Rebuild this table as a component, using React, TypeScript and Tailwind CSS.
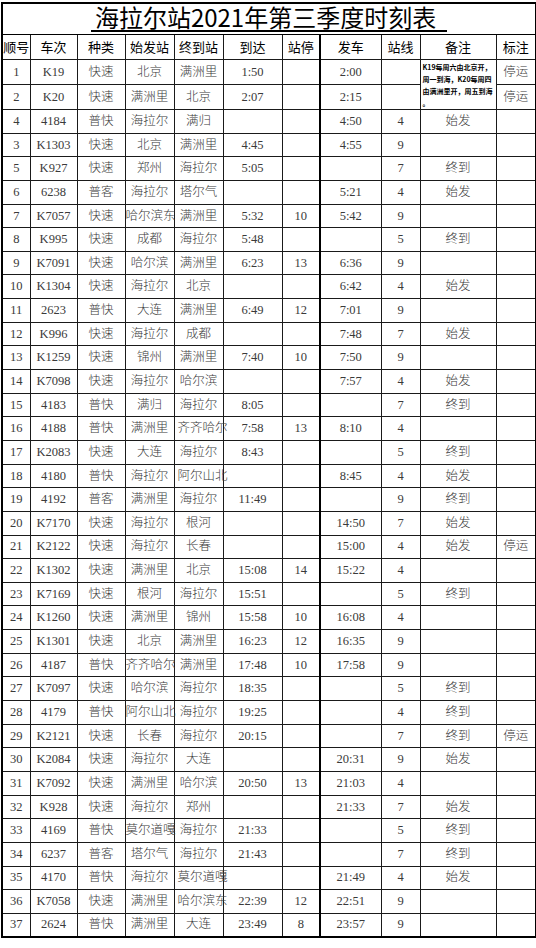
import React from "react";

type Row = [string, string, string, string, string, string, string, string, string, string, string];

const rows: Row[] = [
  ["1", "K19", "快速", "北京", "满洲里", "1:50", "", "2:00", "", "", "停运"],
  ["2", "K20", "快速", "满洲里", "北京", "2:07", "", "2:15", "", "", "停运"],
  ["4", "4184", "普快", "海拉尔", "满归", "", "", "4:50", "4", "始发", ""],
  ["3", "K1303", "快速", "北京", "满洲里", "4:45", "", "4:55", "9", "", ""],
  ["5", "K927", "快速", "郑州", "海拉尔", "5:05", "", "", "7", "终到", ""],
  ["6", "6238", "普客", "海拉尔", "塔尔气", "", "", "5:21", "4", "始发", ""],
  ["7", "K7057", "快速", "哈尔滨东", "满洲里", "5:32", "10", "5:42", "9", "", ""],
  ["8", "K995", "快速", "成都", "海拉尔", "5:48", "", "", "5", "终到", ""],
  ["9", "K7091", "快速", "哈尔滨", "满洲里", "6:23", "13", "6:36", "9", "", ""],
  ["10", "K1304", "快速", "海拉尔", "北京", "", "", "6:42", "4", "始发", ""],
  ["11", "2623", "普快", "大连", "满洲里", "6:49", "12", "7:01", "9", "", ""],
  ["12", "K996", "快速", "海拉尔", "成都", "", "", "7:48", "7", "始发", ""],
  ["13", "K1259", "快速", "锦州", "满洲里", "7:40", "10", "7:50", "9", "", ""],
  ["14", "K7098", "快速", "海拉尔", "哈尔滨", "", "", "7:57", "4", "始发", ""],
  ["15", "4183", "普快", "满归", "海拉尔", "8:05", "", "", "7", "终到", ""],
  ["16", "4188", "普快", "满洲里", "齐齐哈尔", "7:58", "13", "8:10", "4", "", ""],
  ["17", "K2083", "快速", "大连", "海拉尔", "8:43", "", "", "5", "终到", ""],
  ["18", "4180", "普快", "海拉尔", "阿尔山北", "", "", "8:45", "4", "始发", ""],
  ["19", "4192", "普客", "满洲里", "海拉尔", "11:49", "", "", "9", "终到", ""],
  ["20", "K7170", "快速", "海拉尔", "根河", "", "", "14:50", "7", "始发", ""],
  ["21", "K2122", "快速", "海拉尔", "长春", "", "", "15:00", "4", "始发", "停运"],
  ["22", "K1302", "快速", "满洲里", "北京", "15:08", "14", "15:22", "4", "", ""],
  ["23", "K7169", "快速", "根河", "海拉尔", "15:51", "", "", "5", "终到", ""],
  ["24", "K1260", "快速", "满洲里", "锦州", "15:58", "10", "16:08", "4", "", ""],
  ["25", "K1301", "快速", "北京", "满洲里", "16:23", "12", "16:35", "9", "", ""],
  ["26", "4187", "普快", "齐齐哈尔", "满洲里", "17:48", "10", "17:58", "9", "", ""],
  ["27", "K7097", "快速", "哈尔滨", "海拉尔", "18:35", "", "", "5", "终到", ""],
  ["28", "4179", "普快", "阿尔山北", "海拉尔", "19:25", "", "", "4", "终到", ""],
  ["29", "K2121", "快速", "长春", "海拉尔", "20:15", "", "", "7", "终到", "停运"],
  ["30", "K2084", "快速", "海拉尔", "大连", "", "", "20:31", "9", "始发", ""],
  ["31", "K7092", "快速", "满洲里", "哈尔滨", "20:50", "13", "21:03", "4", "", ""],
  ["32", "K928", "快速", "海拉尔", "郑州", "", "", "21:33", "7", "始发", ""],
  ["33", "4169", "普快", "莫尔道嘎", "海拉尔", "21:33", "", "", "5", "终到", ""],
  ["34", "6237", "普客", "塔尔气", "海拉尔", "21:43", "", "", "7", "终到", ""],
  ["35", "4170", "普快", "海拉尔", "莫尔道嘎", "", "", "21:49", "4", "始发", ""],
  ["36", "K7058", "快速", "满洲里", "哈尔滨东", "22:39", "12", "22:51", "9", "", ""],
  ["37", "2624", "普快", "满洲里", "大连", "23:49", "8", "23:57", "9", "", ""],
];

const headers = ["顺号", "车次", "种类", "始发站", "终到站", "到达", "站停", "发车", "站线", "备注", "标注"];
const colW = ["w-[28px]", "w-[47px]", "w-[48px]", "w-[49px]", "w-[49px]", "w-[59px]", "w-[38px]", "w-[61px]", "w-[39px]", "w-[76px]", "w-[40px]"];

const cellBase = "border border-[#1a1a1a] p-0 text-center align-middle whitespace-nowrap";

export default function App() {
  return (
    <div className="w-[536px] h-[948px] bg-white pl-[1px] pt-[2px]">
      <table
        className="table-fixed border-collapse border-2 border-black w-[534px] text-[#3a3a3a]"
        style={{ fontFamily: '"Liberation Serif", "Noto Sans CJK SC", serif' }}
      >
        <colgroup>
          {colW.map((w, i) => (
            <col key={i} className={w} />
          ))}
        </colgroup>
        <tbody>
          <tr className="h-[31px]">
            <td colSpan={11} className="border border-black p-0 text-center align-bottom">
              <span
                className="inline-block border-b-2 border-black pl-[4px] pr-[11px] text-[24px] leading-[26px] font-normal text-black"
                style={{ fontFamily: '"Noto Sans CJK SC", "Noto Sans", sans-serif' }}
              >
                海拉尔站2021年第三季度时刻表
              </span>
            </td>
          </tr>
          <tr className="h-[25px]">
            {headers.map((h, i) => (
              <td
                key={i}
                className={`${cellBase} text-[13px] text-black ${i === 7 ? "border-l-2 border-l-black" : ""}`}
                style={{ fontFamily: '"Noto Sans CJK SC", "Noto Sans", sans-serif' }}
              >
                {h}
              </td>
            ))}
          </tr>
          {rows.map((r, ri) => (
            <tr key={ri} className="h-[23.65px]">
              {r.map((c, ci) => {
                if (ci === 9 && ri === 1) return null;
                if (ci === 9 && ri === 0) {
                  return (
                    <td
                      key={ci}
                      rowSpan={2}
                      className="border border-[#1a1a1a] p-0 pl-[2px] pt-[1px] text-left align-top text-[7px] leading-[12px] font-bold text-black whitespace-nowrap"
                      style={{ fontFamily: '"Noto Sans CJK SC", sans-serif' }}
                    >
                      K19每周六由北京开，
                      <br />
                      周一到海，K20每周四
                      <br />
                      由满洲里开，周五到海
                      <br />。
                    </td>
                  );
                }
                return (
                  <td
                    key={ci}
                    className={`${cellBase} text-[12.5px] font-light ${ci === 7 ? "border-l-2 border-l-black" : ""} ${
                      ci === 4 && c.length === 4 ? "text-left pl-[3px]" : ""
                    }`}
                  >
                    <span className="relative inline-block">{c}</span>
                  </td>
                );
              })}
            </tr>
          ))}
        </tbody>
      </table>
    </div>
  );
}
